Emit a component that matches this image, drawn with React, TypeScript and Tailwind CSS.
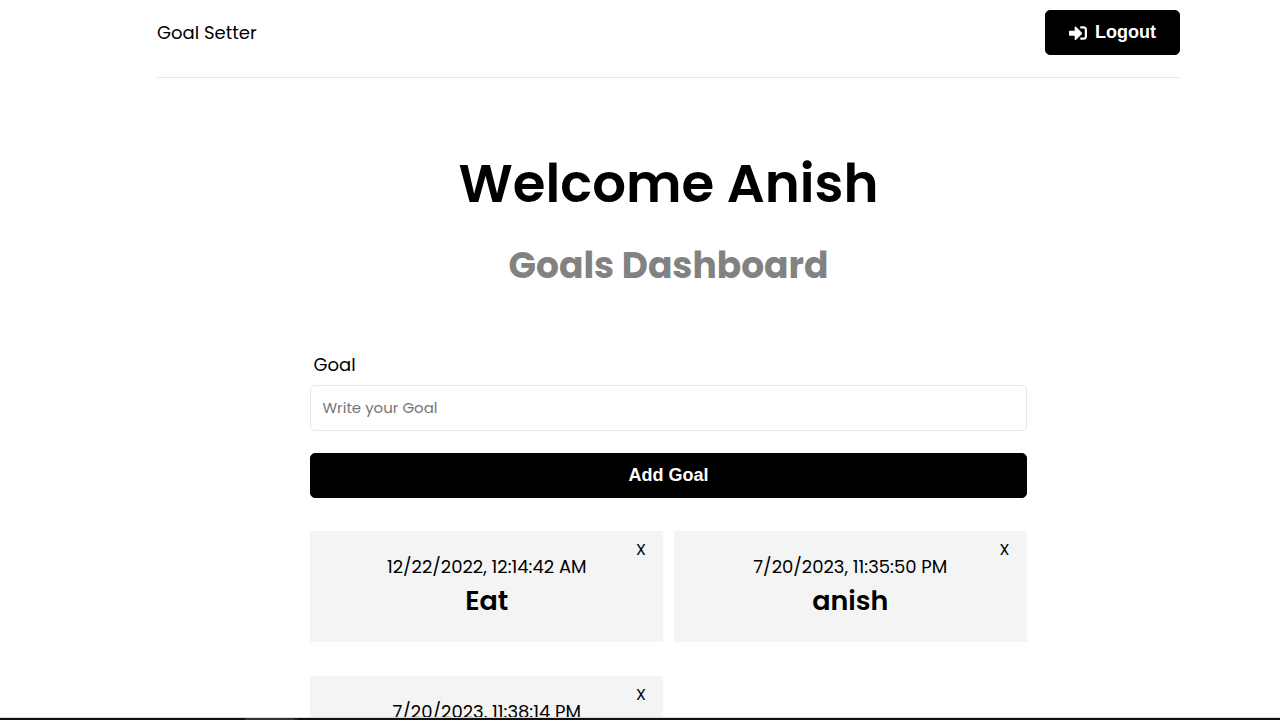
import { useState } from "react";
import { FaSignInAlt } from "react-icons/fa";

type Goal = { id: number; createdAt: string; text: string };

const goals: Goal[] = [
  { id: 1, createdAt: "12/22/2022, 12:14:42 AM", text: "Eat" },
  { id: 2, createdAt: "7/20/2023, 11:35:50 PM", text: "anish" },
  { id: 3, createdAt: "7/20/2023, 11:38:14 PM", text: "anish" },
];

const buttonStyle =
  "flex h-[45px] cursor-pointer items-center justify-center gap-2 rounded-[5px] border border-black bg-black font-['Liberation_Sans',sans-serif] text-[18px] font-bold text-white";

function Header() {
  return (
    <header className="flex h-[78px] items-start justify-between border-b border-[#e6e6e6] pt-[10px]">
      <a href="#" className="mt-[10px] text-[18px] leading-[26px] text-black">
        Goal Setter
      </a>
      <button type="button" className={`${buttonStyle} w-[135px]`}>
        <FaSignInAlt className="size-[18px]" aria-hidden="true" />
        Logout
      </button>
    </header>
  );
}

function GoalForm() {
  const [text, setText] = useState("");
  return (
    <form className="flex flex-col" onSubmit={(e) => e.preventDefault()}>
      <label htmlFor="goal" className="ml-[3px] text-[18px] leading-[26px]">
        Goal
      </label>
      <input
        id="goal"
        name="goal"
        type="text"
        placeholder="Write your Goal"
        value={text}
        onChange={(e) => setText(e.target.value)}
        className="mt-[7px] h-[46px] w-full rounded-[5px] border border-[#e6e6e6] bg-white px-[11px] pb-[2px] text-[15px] placeholder:text-[#757575]"
      />
      <button type="submit" className={`${buttonStyle} mt-[22px] w-full`}>
        Add Goal
      </button>
    </form>
  );
}

function GoalCard({ goal }: { goal: Goal }) {
  return (
    <article className="relative h-[111px] bg-[#f4f4f4] pt-[23px] text-center">
      <time className="block text-[18px] leading-[26px]">{goal.createdAt}</time>
      <h2 className="text-[27px] leading-[42px] font-semibold">{goal.text}</h2>
      <button
        type="button"
        aria-label="X"
        className="absolute top-[7px] right-[17px] cursor-pointer text-[16px] leading-[24px]"
      >
        X
      </button>
    </article>
  );
}

export default function App() {
  return (
    <div className="flex h-screen flex-col bg-white font-[Poppins,Inter,sans-serif] text-black">
      <div className="min-h-0 flex-1 overflow-hidden pl-[57px]">
        <div className="mx-auto w-full max-w-[1023px]">
          <Header />
          <main className="mx-auto w-[70%]">
            <section className="pt-[76px] text-center">
              <h1 className="text-[53px] leading-[60px] font-semibold">Welcome Anish</h1>
              <p className="mt-[28px] text-[36px] leading-[48px] font-bold text-[#828282]">
                Goals Dashboard
              </p>
            </section>
            <section className="mt-[62px]">
              <GoalForm />
            </section>
            <section className="mt-[33px] grid grid-cols-2 gap-x-[11px] gap-y-[34px]">
              {goals.map((goal) => (
                <GoalCard key={goal.id} goal={goal} />
              ))}
            </section>
          </main>
        </div>
      </div>
      <div className="flex h-[3px] border-t border-[#d9d9d9] bg-[#101010] pl-[245px]">
        <div className="w-[49px] bg-[#353535]" />
        <div className="w-[4px] bg-[#202020]" />
      </div>
    </div>
  );
}
